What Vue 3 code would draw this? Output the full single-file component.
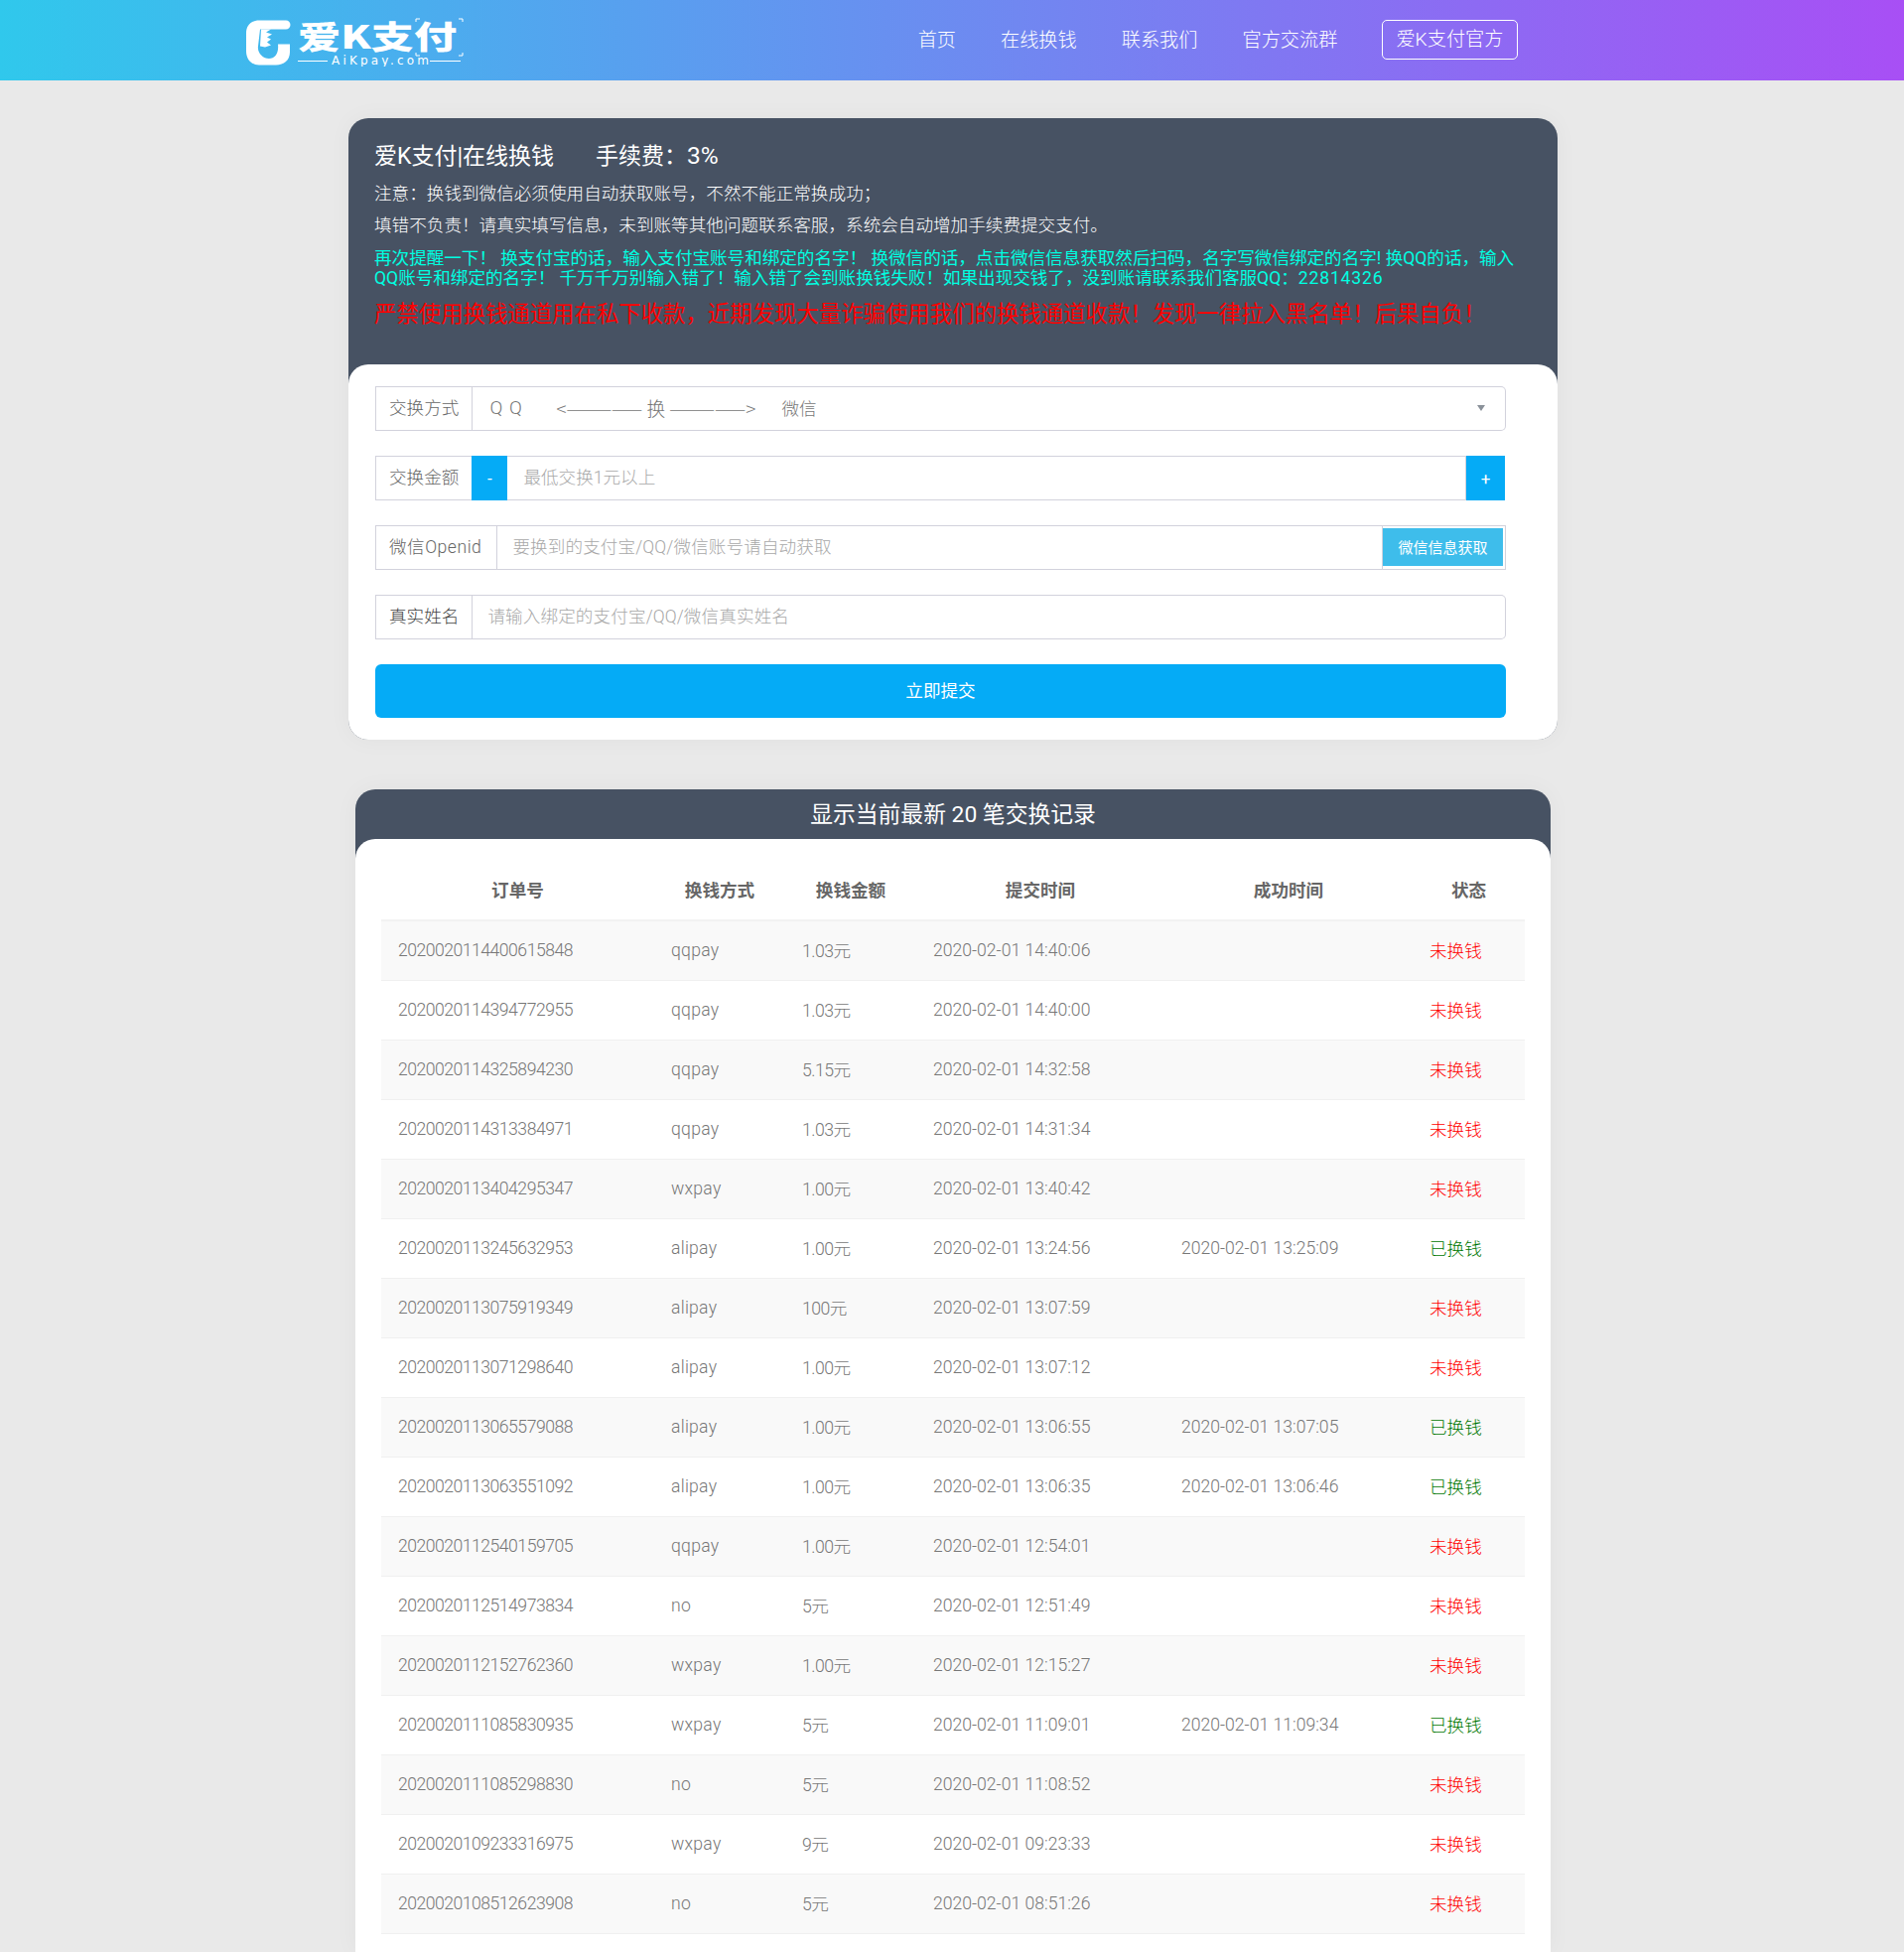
<script setup>
const nav = ['首页', '在线换钱', '联系我们', '官方交流群']
const rows = [
  ['2020020114400615848', 'qqpay', '1.03元', '2020-02-01 14:40:06', '', 0],
  ['2020020114394772955', 'qqpay', '1.03元', '2020-02-01 14:40:00', '', 0],
  ['2020020114325894230', 'qqpay', '5.15元', '2020-02-01 14:32:58', '', 0],
  ['2020020114313384971', 'qqpay', '1.03元', '2020-02-01 14:31:34', '', 0],
  ['2020020113404295347', 'wxpay', '1.00元', '2020-02-01 13:40:42', '', 0],
  ['2020020113245632953', 'alipay', '1.00元', '2020-02-01 13:24:56', '2020-02-01 13:25:09', 1],
  ['2020020113075919349', 'alipay', '100元', '2020-02-01 13:07:59', '', 0],
  ['2020020113071298640', 'alipay', '1.00元', '2020-02-01 13:07:12', '', 0],
  ['2020020113065579088', 'alipay', '1.00元', '2020-02-01 13:06:55', '2020-02-01 13:07:05', 1],
  ['2020020113063551092', 'alipay', '1.00元', '2020-02-01 13:06:35', '2020-02-01 13:06:46', 1],
  ['2020020112540159705', 'qqpay', '1.00元', '2020-02-01 12:54:01', '', 0],
  ['2020020112514973834', 'no', '5元', '2020-02-01 12:51:49', '', 0],
  ['2020020112152762360', 'wxpay', '1.00元', '2020-02-01 12:15:27', '', 0],
  ['2020020111085830935', 'wxpay', '5元', '2020-02-01 11:09:01', '2020-02-01 11:09:34', 1],
  ['2020020111085298830', 'no', '5元', '2020-02-01 11:08:52', '', 0],
  ['2020020109233316975', 'wxpay', '9元', '2020-02-01 09:23:33', '', 0],
  ['2020020108512623908', 'no', '5元', '2020-02-01 08:51:26', '', 0],
]
</script>

<template>
  <div class="site">
    <header class="topbar">
      <svg class="logo" width="220" height="50" viewBox="0 0 220 50">
        <g transform="translate(0 3.500)">
          <path fill="#fff" d="M13 0H40A4.500 4.500 0 0 1 40 9H14L12 26C11 33 17 38.500 23 38.500C29 38.500 33 33 32 24H44V32C44 40 38 45 30 45H13C5 45 0 39 0 31V13C0 5 5 0 13 0Z"/>
          <path fill="#fff" d="M15 9H25L20 12L26 14L21 17L25 19L21 22L25 25L19 27L14 26Z"/>
        </g>
        <text class="logo-cn" transform="translate(52 32) scale(1.08 .8)">爱K支付</text>
        <path fill="none" stroke="#fff" stroke-width="1" d="M171 2H175M171 2V5M214 2H218V5M171 36V39H175M218 36V39H214"/>
        <text class="logo-en" x="86" y="48" textLength="98">AiKpay.com</text>
        <path stroke="#fff" stroke-width="1" d="M52 44.500H82M185 44.500H216"/>
      </svg>
      <nav class="nav">
        <a v-for="item in nav" :key="item" class="nav-link">{{ item }}</a>
        <a class="nav-btn">爱K支付官方</a>
      </nav>
    </header>

    <main class="page">
      <section class="card">
        <div class="notice">
          <h1 class="title"><span>爱K支付|在线换钱</span><span>手续费：<b class="rate">3%</b></span></h1>
          <div class="lines">
            <p>注意：换钱到微信必须使用自动获取账号，不然不能正常换成功；</p>
            <p>填错不负责！请真实填写信息，未到账等其他问题联系客服，系统会自动增加手续费提交支付。</p>
          </div>
          <p class="cyan">再次提醒一下！ 换支付宝的话，输入支付宝账号和绑定的名字！ 换微信的话，点击微信信息获取然后扫码，名字写微信绑定的名字! 换QQ的话，输入<br>QQ账号和绑定的名字！ 千万千万别输入错了！输入错了会到账换钱失败！如果出现交钱了，没到账请联系我们客服QQ：<span class="qqno">22814326</span></p>
          <p class="red">严禁使用换钱通道用在私下收款，近期发现大量诈骗使用我们的换钱通道收款！发现一律拉入黑名单！后果自负！</p>
        </div>
        <form class="form" @submit.prevent>
          <div class="group">
            <label class="addon">交换方式</label>
            <div class="select">
              <span class="qq">Q Q</span>
              <span class="dir">&lt;————— 换 —————&gt;</span>
              <span class="wx">微信</span>
              <i class="caret"></i>
            </div>
          </div>
          <div class="group">
            <label class="addon">交换金额</label>
            <button type="button" class="step minus">-</button>
            <input class="field amount" placeholder="最低交换1元以上">
            <button type="button" class="step plus">+</button>
          </div>
          <div class="group">
            <label class="addon openid">微信Openid</label>
            <input class="field" placeholder="要换到的支付宝/QQ/微信账号请自动获取">
            <div class="fetch-wrap"><button type="button" class="fetch">微信信息获取</button></div>
          </div>
          <div class="group">
            <label class="addon dark">真实姓名</label>
            <input class="field round" placeholder="请输入绑定的支付宝/QQ/微信真实姓名">
          </div>
          <button type="submit" class="submit">立即提交</button>
        </form>
      </section>

      <section class="card records">
        <h2 class="records-title">显示当前最新 20 笔交换记录</h2>
        <div class="records-body">
          <table class="table">
            <colgroup>
              <col class="c1"><col class="c2"><col class="c2"><col class="c3"><col class="c3"><col class="c4">
            </colgroup>
            <thead>
              <tr><th>订单号</th><th>换钱方式</th><th>换钱金额</th><th>提交时间</th><th>成功时间</th><th>状态</th></tr>
            </thead>
            <tbody>
              <tr v-for="r in rows" :key="r[0]">
                <td>{{ r[0] }}</td>
                <td class="method">{{ r[1] }}</td>
                <td class="cjk">{{ r[2] }}</td>
                <td class="date">{{ r[3] }}</td>
                <td class="date">{{ r[4] }}</td>
                <td class="cjk" :class="r[5] ? 'ok' : 'no'">{{ r[5] ? '已换钱' : '未换钱' }}</td>
              </tr>
            </tbody>
          </table>
        </div>
      </section>
    </main>
  </div>
</template>

<style>
html, body { margin: 0; background: #e9e9e9; }
</style>

<style scoped>
.site {
  font-family: Roboto, "Noto Sans CJK SC", sans-serif;
  font-weight: 300;
  color: #666;
  background: #e9e9e9;
}
.topbar {
  height: 81px;
  display: flex;
  align-items: center;
  padding: 0 389.500px 0 248px;
  background: linear-gradient(90deg, #30c8ec, #a84ff5);
  color: #fff;
}
.logo { display: block; margin-top: 2px; }
.logo-cn { font: 900 40px "Noto Sans CJK SC", sans-serif; fill: #fff; }
.logo-en { font: 400 12px "DejaVu Sans", sans-serif; fill: #fff; }
.nav {
  margin-left: auto;
  display: flex;
  align-items: center;
  gap: 45px;
  font-size: 19.2px;
}
.nav-link { padding-bottom: 4px; }
.nav-btn {
  height: 38px;
  line-height: 38px;
  padding: 0 13px;
  margin-bottom: 1px;
  border: 1px solid #fff;
  border-radius: 5px;
}
.page { padding: 38px 0 0 2px; }
.card {
  width: 1218px;
  margin: 0 auto;
  background: #475263;
  border-radius: 20px;
  box-shadow: 0 0 24px rgba(0, 0, 0, .04);
}
.notice { padding: 22px 26px 35px; height: 191px; }
.title {
  margin: 0;
  display: flex;
  gap: 42px;
  height: 34px;
  font-size: 23px;
  font-weight: 400;
  line-height: 34px;
  color: #fff;
}
.rate { font-size: 24.500px; font-weight: 400; line-height: 20px; }
.lines { margin-top: 4px; color: #fff; font-size: 17.6px; line-height: 32px; }
.lines p, .cyan, .red { margin: 0; }
.cyan {
  margin-top: 7px;
  color: #00ffe1;
  font-size: 17.6px;
  font-weight: 400;
  line-height: 20px;
  letter-spacing: -.03px;
  white-space: nowrap;
}
.qqno { letter-spacing: .8px; }
.red {
  margin-top: 10px;
  color: #f00;
  font-size: 22.4px;
  font-weight: 400;
  line-height: 32px;
  white-space: nowrap;
}
.form {
  padding: 22px 52px 22px 27px;
  background: #fff;
  border-radius: 20px;
  display: flex;
  flex-direction: column;
  gap: 25px;
}
.group { height: 45px; display: flex; font-size: 17.6px; }
.addon {
  flex: none;
  box-sizing: border-box;
  padding: 0 13px;
  line-height: 42px;
  border: 1px solid #d2d2dc;
  background: #fff;
  white-space: nowrap;
}
.openid { letter-spacing: .5px; padding-right: 15px; }
.dark { color: #444; }
.select {
  flex: 1;
  display: flex;
  align-items: center;
  padding-bottom: 2px;
  box-sizing: border-box;
  border: 1px solid #d2d2dc;
  border-left: 0;
  border-radius: 0 5px 5px 0;
  color: #777;
  position: relative;
}
.qq { margin-left: 17px; font-size: 19px; letter-spacing: 1px; width: 67px; }
.dir {
  width: 227px;
  white-space: nowrap;
  font-family: "Noto Sans CJK SC", sans-serif;
  font-size: 18.750px;
}
.caret {
  position: absolute;
  right: 20px;
  top: 18px;
  border: 4.500px solid transparent;
  border-top: 6px solid #8a9199;
  border-bottom: 0;
}
.field {
  flex: 1;
  min-width: 0;
  box-sizing: border-box;
  padding: 0 15px 2px;
  border: 1px solid #d2d2dc;
  border-left: 0;
  outline: 0;
  background: #fff;
  color: #666;
  font: inherit;
  font-size: 17.6px;
  letter-spacing: .1px;
}
.field::placeholder { color: #a8a8a8; opacity: 1; }
.amount { padding-left: 16px; letter-spacing: 0; }
.round { border-radius: 0 5px 5px 0; }
.step {
  flex: none;
  height: 45px;
  padding: 0;
  border: 0;
  background: #05abf6;
  color: #fff;
  font: 400 17px Roboto, sans-serif;
}
.minus { width: 36px; margin-left: -1px; }
.plus { width: 39px; margin-right: 1px; }
.fetch-wrap {
  flex: none;
  box-sizing: border-box;
  width: 124px;
  padding: 2px 2px 3px 0;
  border: 1px solid #d2d2dc;
  border-left: 0;
}
.fetch {
  display: block;
  width: 100%;
  height: 100%;
  padding: 0 0 2px;
  border: 0;
  background: #3ebdeb;
  color: #fff;
  font: inherit;
  font-size: 15px;
  font-weight: 400;
}
.submit {
  height: 54px;
  padding: 0 0 3px;
  border: 0;
  border-radius: 6px;
  background: #05abf6;
  color: #fff;
  font: inherit;
  font-size: 17.6px;
  font-weight: 400;
}
.records {
  width: 1204px;
  margin-top: 50px;
  border-radius: 20px 20px 0 0;
}
.records-title {
  margin: 0;
  box-sizing: border-box;
  height: 50px;
  padding-top: 1px;
  line-height: 50px;
  text-align: center;
  color: #fff;
  font-size: 22.8px;
  font-weight: 400;
}
.records-body {
  padding: 20px 26px 19px;
  background: #fff;
  border-radius: 20px 20px 0 0;
}
.table {
  width: 1152px;
  table-layout: fixed;
  border-collapse: collapse;
  font-size: 17.6px;
}
.c1 { width: 275px; }
.c2 { width: 132px; }
.c3 { width: 250px; }
.c4 { width: 113px; }
th {
  height: 61px;
  padding: 0;
  font-weight: 700;
  color: #666;
  text-align: center;
}
td {
  height: 60px;
  box-sizing: border-box;
  padding: 0 17px;
  border-top: 1px solid #f0f0f0;
  letter-spacing: -.5px;
  color: #777;
  white-space: nowrap;
}
tbody tr:first-child td { border-top: 2px solid #f2f2f2; }
tbody tr:last-child td { border-bottom: 1px solid #f0f0f0; }
tbody tr:nth-child(odd) { background: #f9f9f9; }
.method { letter-spacing: .25px; }
.date { letter-spacing: 0; }
.cjk { padding-bottom: 2px; }
.no { color: #f00; letter-spacing: 0; }
.ok { color: #070; letter-spacing: 0; }
</style>
